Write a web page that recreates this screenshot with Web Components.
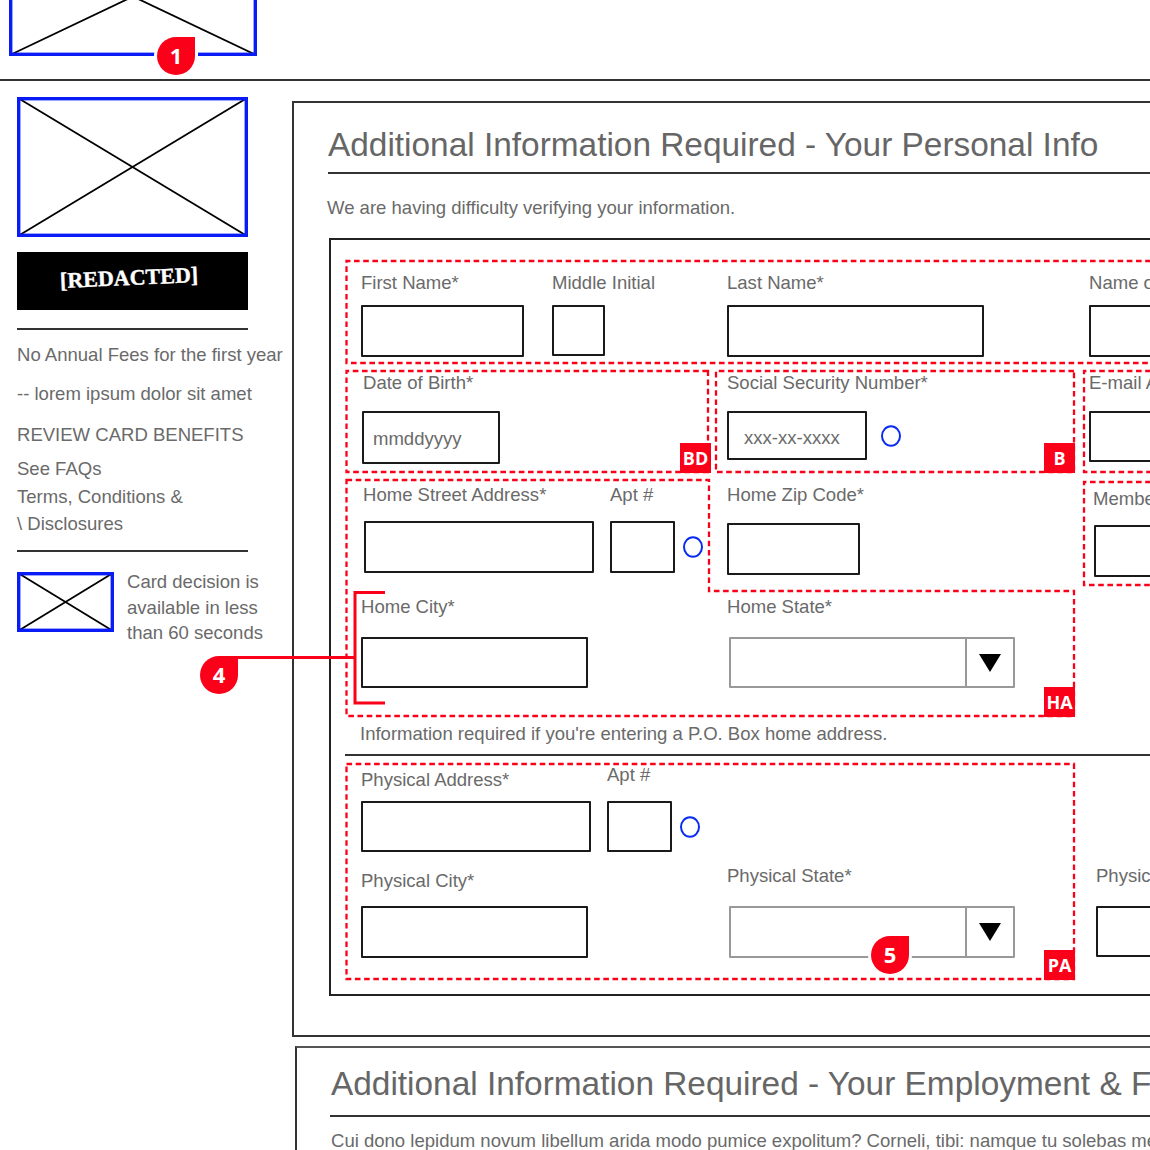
<!DOCTYPE html>
<html>
<head>
<meta charset="utf-8">
<title>Additional Information Required</title>
<style>
  html, body { margin: 0; height: 1150px; overflow: hidden; background: #fff; }
  body { position: relative; font-family: "Liberation Sans", Arial, sans-serif; color: #6a6a6a; }
</style>
</head>
<body>
<wire-page>
  <wire-header slot="header"></wire-header>
  <wire-sidebar slot="sidebar">
    <wire-placeholder w="231" h="140" slot="hero"></wire-placeholder>
    <span slot="brand">[REDACTED]</span>
    <p slot="links" style="margin:0 0 19px">No Annual Fees for the first year</p>
    <p slot="links" style="margin:0 0 21px">-- lorem ipsum dolor sit amet</p>
    <p slot="links" style="margin:0 0 14px">REVIEW CARD BENEFITS</p>
    <p slot="links" style="margin:0 0 8px">See FAQs</p>
    <p slot="links" style="margin:0 0 7px">Terms, Conditions &amp;</p>
    <p slot="links" style="margin:0">\ Disclosures</p>
    <wire-placeholder w="97" h="60" slot="promo-img"></wire-placeholder>
    <span slot="promo">Card decision is<br>available in less<br>than 60 seconds</span>
  </wire-sidebar>
  <div slot="main">
    <wire-panel heading="Additional Information Required - Your Personal Info" intro="We are having difficulty verifying your information.">
      <wire-form>
        <wire-row top="33">
          <wire-field label="First Name*" w="163" h="52" gap="12"></wire-field>
          <wire-field label="Middle Initial" dx="28" w="53" h="51" gap="12"></wire-field>
          <wire-field label="Last Name*" dx="122" w="257" h="52" gap="12"></wire-field>
          <wire-field label="Name on Card*" dx="105" w="200" h="52" gap="12"></wire-field>
        </wire-row>
        <wire-row top="16">
          <wire-field label="Date of Birth*" dx="1" lx="1" w="138" h="53" gap="18" value="mmddyyyy" vx="9"></wire-field>
          <wire-field label="Social Security Number*" dx="227" w="140" h="49" gap="18" value="xxx-xx-xxxx" vx="15" vy="5"></wire-field>
          <wire-lookup dx="14" top="52"></wire-lookup>
          <wire-field label="E-mail Address*" dx="188" w="200" h="51" gap="18"></wire-field>
        </wire-row>
        <wire-row top="21">
          <wire-field label="Home Street Address*" dx="3" lx="-1" w="230" h="52" gap="16"></wire-field>
          <wire-field label="Apt #" dx="16" w="65" h="52" gap="16"></wire-field>
          <wire-lookup dx="8" top="51"></wire-lookup>
          <wire-field label="Home Zip Code*" dx="24" w="133" h="52" gap="18"></wire-field>
          <wire-field label="Member Number" dx="234" top="4" lx="-1" w="200" h="52" gap="16"></wire-field>
        </wire-row>
        <wire-row top="20">
          <wire-field label="Home City*" w="227" h="51" gap="20"></wire-field>
          <wire-field label="Home State*" select dx="141" lx="-2" w="286" h="51" gap="20"></wire-field>
        </wire-row>
        <wire-note top="36" label="Information required if you're entering a P.O. Box home address."></wire-note>
        <wire-row top="9">
          <wire-field label="Physical Address*" top="5" w="230" h="51" gap="11"></wire-field>
          <wire-field label="Apt #" dx="16" w="65" h="51" gap="16"></wire-field>
          <wire-lookup dx="8" top="51"></wire-lookup>
        </wire-row>
        <wire-row top="14">
          <wire-field label="Physical City*" top="5" w="227" h="52" gap="15"></wire-field>
          <wire-field label="Physical State*" select dx="141" lx="-2" w="286" h="52" gap="20"></wire-field>
          <wire-field label="Physical Zip Code*" dx="81" w="200" h="51" gap="20"></wire-field>
        </wire-row>
      </wire-form>
    </wire-panel>
    <wire-panel second heading="Additional Information Required - Your Employment &amp; Financial Info" intro="Cui dono lepidum novum libellum arida modo pumice expolitum? Corneli, tibi: namque tu solebas meas esse aliquid putare nugas."></wire-panel>
  </div>
</wire-page>
<wire-annotations></wire-annotations>

<script>
  // small helper so every element can read numeric attributes
  const num = (el, name, fallback = 0) =>
    el.hasAttribute(name) ? Number(el.getAttribute(name)) : fallback;

  class WirePlaceholder extends HTMLElement {
    connectedCallback() {
      const w = num(this, "w"), h = num(this, "h");
      this.attachShadow({ mode: "open" });
      this.shadowRoot.innerHTML = `
        <style>
          :host { display: block; width: ${w}px; height: ${h}px; }
          svg { display: block; }
        </style>
        <svg width="${w}" height="${h}" viewBox="0 0 ${w} ${h}">
          <line x1="1" y1="1" x2="${w - 1}" y2="${h - 1}" stroke="#000" stroke-width="1.8"/>
          <line x1="${w - 1}" y1="1" x2="1" y2="${h - 1}" stroke="#000" stroke-width="1.8"/>
          <rect x="1.7" y="1.7" width="${w - 3.4}" height="${h - 3.4}" fill="none" stroke="#0a1cf5" stroke-width="3.4"/>
        </svg>`;
    }
  }

  class WireHeader extends HTMLElement {
    constructor() {
      super();
      this.attachShadow({ mode: "open" });
      this.shadowRoot.innerHTML = `
        <style>
          :host {
            display: flex;
            align-items: flex-end;
            height: 81px;
            padding: 0 0 23px 9px;
            box-sizing: border-box;
            border-bottom: 2px solid #333;
            overflow: hidden;
          }
        </style>
        <wire-placeholder w="248" h="119"></wire-placeholder>`;
    }
  }

  class WireSidebar extends HTMLElement {
    constructor() {
      super();
      this.attachShadow({ mode: "open" });
      this.shadowRoot.innerHTML = `
        <style>
          :host {
            display: block;
            width: 275px;
            flex: none;
            padding-top: 16px;
            font-size: 18.55px;
            line-height: 20px;
            white-space: nowrap;
          }
          .brand {
            width: 231px;
            height: 58px;
            margin-top: 15px;
            background: #000;
            color: #fff;
            display: flex;
            align-items: center;
            justify-content: center;
            font: bold 22px "Liberation Serif", serif;
            -webkit-text-stroke: 0.4px #fff;
          }
          .brand span { display: inline-block; transform: rotate(-2.5deg); margin: -6px 0 0 -6px; }
          hr { width: 231px; margin: 0; border: 0; border-top: 2px solid #333; }
          .links { margin: 15px 0 16px; }
          .promo { display: flex; gap: 13px; margin-top: 20px; line-height: 25.5px; }
          .promo-text { margin-top: -3px; }
        </style>
        <slot name="hero"></slot>
        <div class="brand"><span><slot name="brand"></slot></span></div>
        <hr style="margin-top:18px">
        <div class="links"><slot name="links"></slot></div>
        <hr>
        <div class="promo">
          <slot name="promo-img"></slot>
          <div class="promo-text"><slot name="promo"></slot></div>
        </div>`;
    }
  }

  class WirePage extends HTMLElement {
    constructor() {
      super();
      this.attachShadow({ mode: "open" });
      this.shadowRoot.innerHTML = `
        <style>
          :host { display: block; width: 1150px; height: 1150px; overflow: hidden; }
          .body { display: flex; padding-left: 17px; }
          .main { flex: none; width: 1000px; padding-top: 20px; }
        </style>
        <slot name="header"></slot>
        <div class="body">
          <slot name="sidebar"></slot>
          <div class="main"><slot name="main"></slot></div>
        </div>`;
    }
  }

  class WirePanel extends HTMLElement {
    connectedCallback() {
      const second = this.hasAttribute("second");
      this.attachShadow({ mode: "open" });
      this.shadowRoot.innerHTML = `
        <style>
          :host {
            display: block;
            box-sizing: border-box;
            border: 2px solid #333;
            border-right: 0;
            padding: ${second ? 16 : 22}px 0 ${second ? 0 : 39}px 34px;
            margin: ${second ? "9px 0 0 3px" : "0"};
            ${second ? "border-top-color: #555; height: 140px;" : ""}
          }
          h1 {
            margin: 0;
            font-size: 33.4px;
            font-weight: normal;
            line-height: 40px;
            color: #666;
            white-space: nowrap;
          }
          .rule { height: 2px; background: #333; margin: ${second ? "11px 0 14px -1px" : "7px 0 24px 0"}; }
          p {
            margin: 0 0 20px ${second ? 0 : -1}px;
            font-size: 18.55px;
            line-height: 20px;
            white-space: nowrap;
          }
        </style>
        <h1>${this.getAttribute("heading").replace("&", "&amp;")}</h1>
        <div class="rule"></div>
        <p>${this.getAttribute("intro")}</p>
        <slot></slot>`;
    }
  }

  class WireForm extends HTMLElement {
    constructor() {
      super();
      this.attachShadow({ mode: "open" });
      this.shadowRoot.innerHTML = `
        <style>
          :host {
            display: block;
            box-sizing: border-box;
            margin-left: 1px;
            border: 2px solid #222;
            border-right: 0;
            padding: 0 0 36px 30px;
          }
        </style>
        <slot></slot>`;
    }
  }

  class WireRow extends HTMLElement {
    connectedCallback() {
      this.attachShadow({ mode: "open" });
      this.shadowRoot.innerHTML = `
        <style>
          :host {
            display: flex;
            align-items: flex-start;
            margin-top: ${num(this, "top")}px;
          }
        </style>
        <slot></slot>`;
    }
  }

  class WireField extends HTMLElement {
    connectedCallback() {
      const w = num(this, "w"), h = num(this, "h");
      const isSelect = this.hasAttribute("select");
      const value = this.getAttribute("value") || "";
      this.attachShadow({ mode: "open" });
      this.shadowRoot.innerHTML = `
        <style>
          :host {
            display: block;
            flex: none;
            width: ${w}px;
            margin-left: ${num(this, "dx")}px;
            margin-top: ${num(this, "top")}px;
            font-size: 18.55px;
            line-height: 20px;
            white-space: nowrap;
          }
          label { display: block; margin-left: ${num(this, "lx")}px; height: 20px; }
          .box {
            box-sizing: border-box;
            width: ${w}px;
            height: ${h}px;
            margin-top: ${num(this, "gap")}px;
            border: 2px solid ${isSelect ? "#999" : "#1a1a1a"};
            border-radius: 1px;
            display: flex;
            align-items: center;
            padding-left: ${num(this, "vx", 10)}px;
            padding-top: ${isSelect ? 0 : num(this, "vy", 3)}px;
            background: #fff;
          }
          .btn {
            margin-left: auto;
            width: 46px;
            height: ${h - 4}px;
            border-left: 2px solid #999;
            display: flex;
            align-items: center;
            justify-content: center;
          }
        </style>
        <label>${this.getAttribute("label")}</label>
        <div class="box">${value}${isSelect ? `
          <div class="btn"><svg width="22" height="18" viewBox="0 0 22 18"><path d="M0 0H22L11 18Z" fill="#000"/></svg></div>` : ""}</div>`;
    }
  }

  class WireLookup extends HTMLElement {
    connectedCallback() {
      this.attachShadow({ mode: "open" });
      this.shadowRoot.innerHTML = `
        <style>
          :host {
            display: block;
            flex: none;
            width: 20px;
            height: 22px;
            margin-left: ${num(this, "dx")}px;
            margin-top: ${num(this, "top")}px;
          }
          svg { display: block; }
        </style>
        <svg width="20" height="22" viewBox="0 0 20 22"><ellipse cx="10" cy="11" rx="9" ry="9.8" fill="none" stroke="#0a2cf0" stroke-width="2"/></svg>`;
    }
  }

  class WireNote extends HTMLElement {
    connectedCallback() {
      this.attachShadow({ mode: "open" });
      this.shadowRoot.innerHTML = `
        <style>
          :host { display: block; margin-top: ${num(this, "top")}px; font-size: 18.55px; line-height: 20px; white-space: nowrap; }
          p { margin: 0 0 0 -1px; }
          .rule { height: 2px; background: #333; margin: 10px 0 0 -16px; }
        </style>
        <p>${this.getAttribute("label")}</p>
        <div class="rule"></div>`;
    }
  }

  // red callouts lie over the form, their place on the canvas is the content
  class WireAnnotations extends HTMLElement {
    constructor() {
      super();
      const red = "#fb0019";
      const regions = [
        "M1160 261H346.5V363H1160",
        "M708 371H346.5V472H708Z",
        "M1074 371H716V472H1074Z",
        "M1160 371H1084V472H1160",
        "M1160 482H1084V585H1160",
        "M346.5 480H709V591H1074V716H346.5Z",
        "M346.5 764H1074V979H346.5Z",
      ];
      const tags = [["BD", 680, 443], ["B", 1044, 443], ["HA", 1044, 687], ["PA", 1044, 950]];
      const badges = [["1", 157, 37, true], ["4", 200, 656, false], ["5", 871, 936, true]];
      this.attachShadow({ mode: "open" });
      this.shadowRoot.innerHTML = `
        <style>
          :host { position: absolute; left: 0; top: 0; width: 1150px; height: 1150px; pointer-events: none; overflow: hidden; }
          svg { position: absolute; left: 0; top: 0; }
          .tag {
            position: absolute;
            width: 31px;
            height: 30px;
            background: ${red};
            color: #fff;
            font: bold 18px/31px "Open Sans", sans-serif;
            text-align: center;
          }
          .badge {
            position: absolute;
            width: 38px;
            height: 38px;
            background: ${red};
            color: #fff;
            border-radius: 50% 0 50% 50%;
            font: bold 22px/37px "Open Sans", sans-serif;
            text-align: center;
          }
          .halo { box-shadow: 0 0 0 3px #fff; }
        </style>
        <svg width="1150" height="1150" viewBox="0 0 1150 1150" fill="none">
          ${regions.map((d) => `<path d="${d}" stroke="${red}" stroke-width="2.3" stroke-dasharray="5.6 3.6"/>`).join("")}
          <path d="M385 592.5H355V703H385M238 657.5H355" stroke="${red}" stroke-width="3"/>
        </svg>
        ${tags.map(([t, x, y]) => `<div class="tag" style="left:${x}px;top:${y}px">${t}</div>`).join("")}
        ${badges.map(([t, x, y, halo]) => `<div class="badge ${halo ? "halo" : ""}" style="left:${x}px;top:${y}px">${t}</div>`).join("")}`;
    }
  }

  customElements.define("wire-placeholder", WirePlaceholder);
  customElements.define("wire-header", WireHeader);
  customElements.define("wire-sidebar", WireSidebar);
  customElements.define("wire-page", WirePage);
  customElements.define("wire-panel", WirePanel);
  customElements.define("wire-form", WireForm);
  customElements.define("wire-row", WireRow);
  customElements.define("wire-field", WireField);
  customElements.define("wire-lookup", WireLookup);
  customElements.define("wire-note", WireNote);
  customElements.define("wire-annotations", WireAnnotations);
</script>
</body>
</html>
